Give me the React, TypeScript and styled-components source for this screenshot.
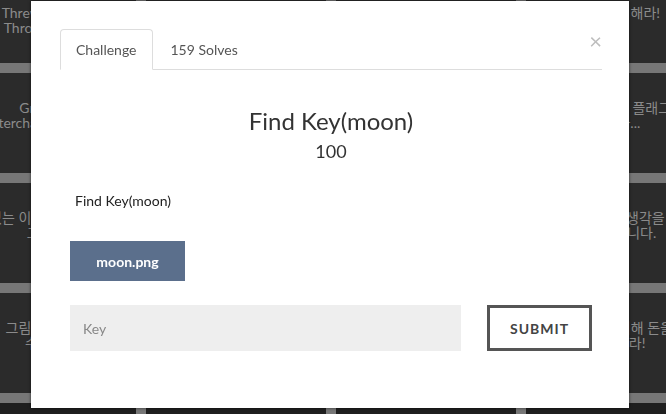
import React, { FC } from 'react';
import styled, { createGlobalStyle } from 'styled-components';

const GlobalStyle = createGlobalStyle`
  html, body {
    margin: 0;
    padding: 0;
    width: 666px;
    height: 414px;
    overflow: hidden;
    background: #777;
    font-family: 'Lato', 'Noto Sans CJK KR', sans-serif;
  }
`;

interface Tile {
  lines: string[],
  dark?: boolean,
  low?: boolean,
}

const tiles: Tile[] = [
  { lines: ['Threw the Ball', 'Throw it Back'], low: true },
  { lines: ['Basic Auth', 'Login Page'], low: true },
  { lines: ['Hidden Text', 'Look Closer'], low: true },
  { lines: ['빨리 제출 해라!'], low: true },

  { lines: ['Greeting', 'Interchanges Game'] },
  { lines: ['Cookie', 'Admin'] },
  { lines: ['Reverse', 'Crackme'] },
  { lines: ['어딘가 숨겨진 플래그를', '찾아라...'] },

  { lines: ['있는 이 문제를 풀어', '고민해'] },
  { lines: ['Easy', 'SQL'] },
  { lines: ['Base', 'Encoding'] },
  { lines: ['다시 한번 생각을', '생각해봅니다.'] },

  { lines: ['그림을 자세히', '수 있나'] },
  { lines: ['Forensic', 'Memory'] },
  { lines: ['Pwn', 'Overflow'] },
  { lines: ['많은 돈을 위해 돈을', '돈 벌어라!'] },

  { lines: ['-'], dark: true },
  { lines: ['-'], dark: true },
  { lines: ['-'], dark: true },
  { lines: ['-'], dark: true },
];

const App: FC = () => {
  return (
    <>
      <GlobalStyle />
      <Board>
        {tiles.map((tile, i) => (
          <Card key={i} dark={tile.dark} low={tile.low}>
            {tile.lines.map((line, j) => <CardLine key={j}>{line}</CardLine>)}
          </Card>
        ))}
      </Board>

      <Modal>
        <Header>
          <Tabs>
            <Tab active>Challenge</Tab>
            <Tab>159 Solves</Tab>
          </Tabs>
          <Close>×</Close>
        </Header>

        <Title>Find Key(moon)</Title>
        <Points>100</Points>
        <Description>Find Key(moon)</Description>

        <FileButton>moon.png</FileButton>

        <SubmitRow>
          <KeyInput placeholder="Key" />
          <SubmitButton>SUBMIT</SubmitButton>
        </SubmitRow>
      </Modal>
    </>
  )
}

const Board = styled.div`
  display: grid;
  grid-template-columns: repeat(4, 180px);
  grid-auto-rows: 100px;
  gap: 10px;
  margin: -37px 0 0 -44px;
`;

const Card = styled('div')<{ dark?: boolean, low?: boolean }>`
  background: ${({ dark }) => dark ? '#1f1f1f' : '#2b2b2b'};
  color: #8b8b8b;
  font-size: 14px;
  line-height: 15px;
  text-align: center;
  padding-top: ${({ low }) => low ? '42px' : '27px'};
  box-sizing: border-box;
  overflow: hidden;
  white-space: nowrap;
`;

const CardLine = styled.div`
  display: flex;
  justify-content: center;
`;

const Modal = styled.div`
  position: fixed;
  top: 1px;
  left: 31px;
  width: 598px;
  height: 407px;
  box-sizing: border-box;
  background: #fff;
  padding: 28px 27px 0 29px;
  box-shadow: 0 0 3px rgba(0, 0, 0, .6);
`;

const Header = styled.div`
  display: flex;
  align-items: flex-start;
  border-bottom: 1px solid #ddd;
`;

const Tabs = styled.div`
  display: flex;
  margin-bottom: -1px;
`;

const Tab = styled('div')<{ active?: boolean }>`
  height: 41px;
  padding: 0 15px;
  display: flex;
  align-items: center;
  font-size: 14px;
  color: #555;
  box-sizing: border-box;
  border: 1px solid ${({ active }) => active ? '#ddd' : 'transparent'};
  border-bottom-color: ${({ active }) => active ? '#fff' : 'transparent'};
  border-radius: 4px 4px 0 0;
  background: ${({ active }) => active ? '#fff' : 'transparent'};

  & + & {
    padding-left: 17px;
  }
`;

const Close = styled.div`
  margin-left: auto;
  margin-top: 1px;
  font-size: 22px;
  line-height: 22px;
  color: #bdbdbd;
  cursor: pointer;
`;

const Title = styled.h3`
  margin: 36px 0 0;
  text-align: center;
  font-size: 24px;
  font-weight: 400;
  line-height: 29px;
  color: #333;
`;

const Points = styled.div`
  margin-top: 5px;
  text-align: center;
  font-size: 18px;
  line-height: 22px;
  color: #333;
`;

const Description = styled.p`
  margin: 29px 0 0 15px;
  font-size: 14px;
  line-height: 20px;
  color: #222;
`;

const FileButton = styled.button`
  display: block;
  margin: 30px 0 0 10px;
  width: 115px;
  height: 40px;
  border: none;
  background: #5b6f8c;
  color: #fff;
  font-family: 'Lato', sans-serif;
  font-weight: 700;
  font-size: 14px;
  cursor: pointer;
`;

const SubmitRow = styled.div`
  display: flex;
  gap: 26px;
  margin: 24px 0 0 10px;
`;

const KeyInput = styled.input`
  width: 391px;
  height: 46px;
  box-sizing: border-box;
  border: none;
  background: #eee;
  padding: 0 13px;
  font-family: 'Lato', sans-serif;
  font-size: 14px;
  color: #333;
  outline: none;

  &::placeholder {
    color: #888;
  }
`;

const SubmitButton = styled.button`
  width: 105px;
  height: 46px;
  box-sizing: border-box;
  border: 3px solid #555;
  background: #fff;
  color: #444;
  font-family: 'Lato', sans-serif;
  font-weight: 700;
  font-size: 14px;
  letter-spacing: 1px;
  cursor: pointer;
`;

export default App;
